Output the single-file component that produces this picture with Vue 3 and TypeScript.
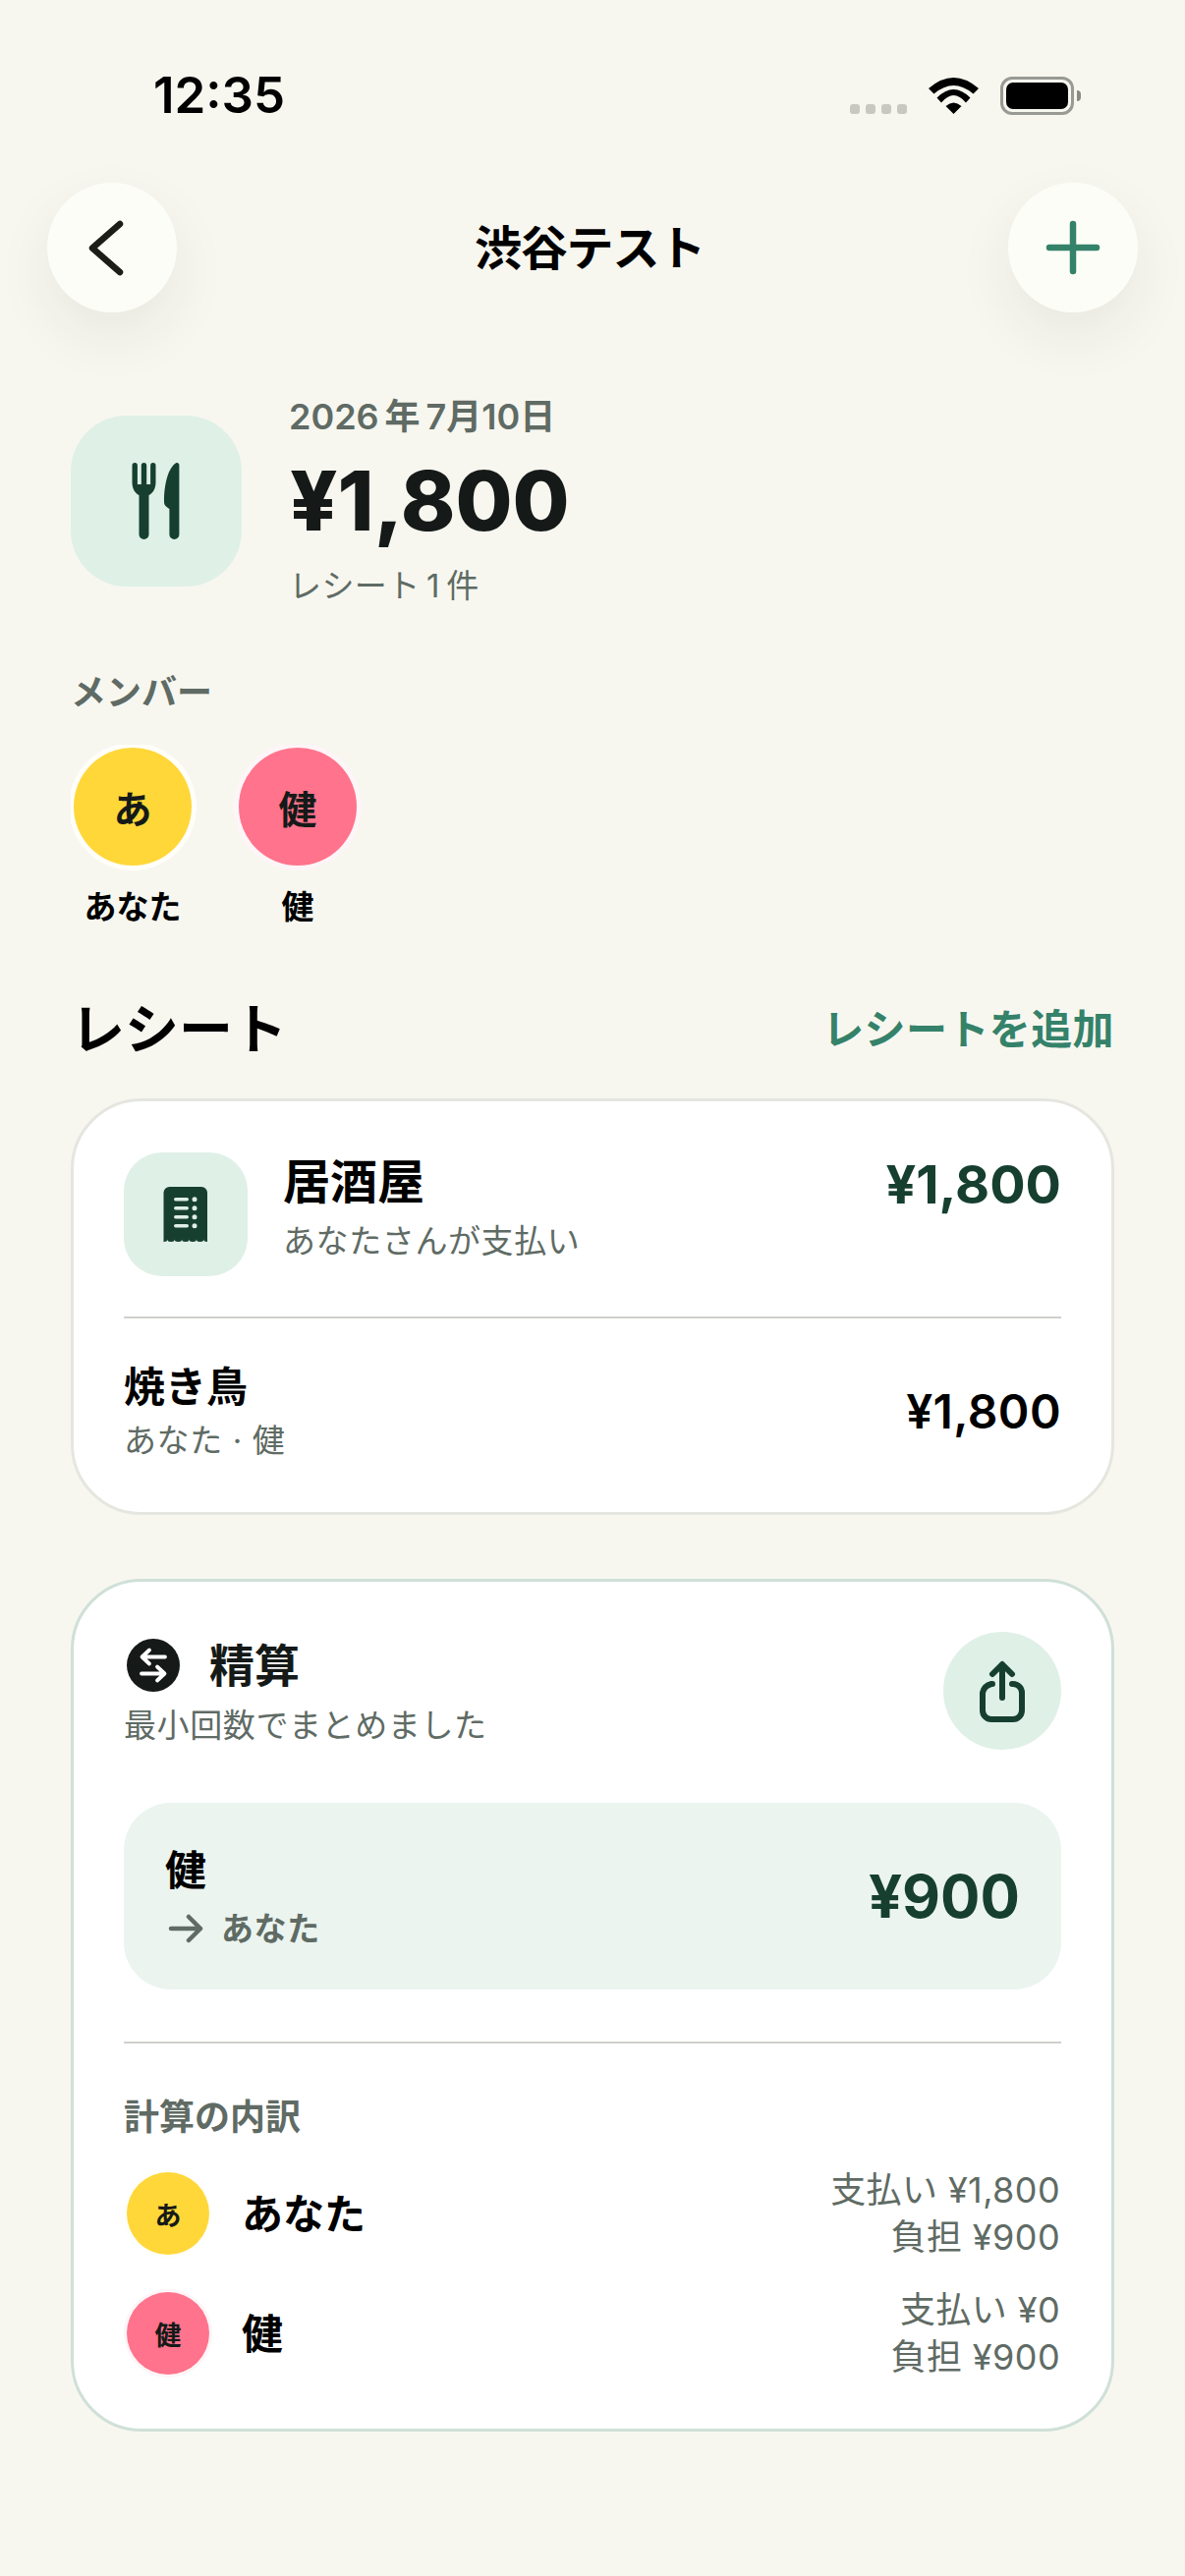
<script setup lang="ts">
interface Person { mark: string; name: string; tone: string; paid: string; owed: string }
const people: Person[] = [
  { mark: 'あ', name: 'あなた', tone: 'yellow', paid: '支払い ¥1,800', owed: '負担 ¥900' },
  { mark: '健', name: '健', tone: 'pink', paid: '支払い ¥0', owed: '負担 ¥900' },
]
const ticks = [0, 9, 18, 27]
</script>

<template>
  <div class="page">
    <header class="status">
      <span class="time">12:35</span>
      <div class="status-right">
        <div class="dots"><i></i><i></i><i></i><i></i></div>
        <svg class="wifi" width="51" height="37" viewBox="0 0 51 37">
          <path d="M25.5 37L17.5 29Q25.5 22 33.5 29Z" />
          <path d="M8.5 20.5Q25.5 3.5 42.5 20.5L38 25.5Q25.5 10.5 13 25.5Z" />
          <path d="M0 11Q25.5 -11 51 11L45.5 16.5Q25.5 -0.5 5.5 16.5Z" />
        </svg>
        <div class="battery"><div class="battery-body"><div class="battery-fill"></div></div><div class="battery-nub"></div></div>
      </div>
    </header>

    <nav class="nav">
      <button class="round">
        <svg width="132" height="132" viewBox="0 0 132 132"><path d="M74 42L46 66.500L74 91" fill="none" stroke="#1d1d18" stroke-width="6.500" stroke-linecap="round" stroke-linejoin="round" /></svg>
      </button>
      <h1 class="nav-title">渋谷テスト</h1>
      <button class="round">
        <svg width="132" height="132" viewBox="0 0 132 132"><path d="M66 42V90M42 66H90" fill="none" stroke="#35826a" stroke-width="6.500" stroke-linecap="round" /></svg>
      </button>
    </nav>

    <section class="hero">
      <div class="hero-icon">
        <svg width="174" height="174" viewBox="0 0 174 174" fill="#163f30">
          <path d="M65.200 48a2.700 2.700 0 0 1 2.700 2.700V70h3.900V50.700a2.700 2.700 0 0 1 5.400 0V70h3.900V50.700a2.700 2.700 0 0 1 5.400 0V68c0 6.500-3 11-7 13V121a5 5 0 0 1-10 0V81c-4-2-7-6.500-7-13V50.700a2.700 2.700 0 0 1 2.700-2.700z" />
          <path d="M107.500 48a2.700 2.700 0 0 1 2.900 2.700V121a5 5 0 0 1-10 0V95c-3-2-5.400-3.500-5.400-7C95 70 99 53 107.500 48z" />
        </svg>
      </div>
      <div class="hero-text">
        <div class="hero-date">2026&#8201;年&#8201;7月10日</div>
        <div class="hero-amount">¥1,800</div>
        <div class="hero-sub">レシート&#8201;1&#8201;件</div>
      </div>
    </section>

    <div class="members-label">メンバー</div>
    <div class="members">
      <div v-for="p in people" :key="p.name" class="member">
        <div class="avatar" :class="p.tone">{{ p.mark }}</div>
        <div class="member-name">{{ p.name }}</div>
      </div>
    </div>

    <div class="section-head">
      <h2 class="section-title">レシート</h2>
      <span class="section-link">レシートを追加</span>
    </div>

    <section class="card receipt-card">
      <div class="receipt-top">
        <div class="receipt-icon">
          <svg width="126" height="126" viewBox="0 0 126 126">
            <path d="M47 35H79a6 6 0 0 1 6 6V91q-3.700 0-3.700-2.500q0 2.500-3.700 2.500t-3.700-2.500q0 2.500-3.700 2.500t-3.700-2.500q0 2.500-3.700 2.500t-3.700-2.500q0 2.500-3.700 2.500t-3.700-2.500q0 2.500-3.700 2.500t-3.700-2.500q0 2.500-3.800 2.500V41a6 6 0 0 1 6-6z" fill="#163f30" />
            <g v-for="y in ticks" :key="y">
              <rect x="51" :y="46 + y" width="15" height="3.500" rx="1.750" fill="#dfeee6" />
              <circle cx="72" :cy="47.750 + y" r="2.500" fill="#dfeee6" />
            </g>
          </svg>
        </div>
        <div class="receipt-text">
          <div class="receipt-name">居酒屋</div>
          <div class="sub">あなたさんが支払い</div>
        </div>
        <div class="receipt-price">¥1,800</div>
      </div>
      <div class="rule receipt-rule"></div>
      <div class="item">
        <div>
          <div class="item-name">焼き鳥</div>
          <div class="sub">あなた · 健</div>
        </div>
        <div class="item-price">¥1,800</div>
      </div>
    </section>

    <section class="card settle-card">
      <div class="settle-head">
        <div class="settle-text">
          <div class="settle-title-row">
            <svg width="54" height="54" viewBox="0 0 54 54">
              <circle cx="27" cy="27" r="27" fill="#151a18" />
              <path d="M39 18.500H16M23 11.500L15.500 18.500L23 25.500M15 35.500H38M31 28.500L38.500 35.500L31 42.500" fill="none" stroke="#fff" stroke-width="3.800" stroke-linecap="round" stroke-linejoin="round" />
            </svg>
            <h2 class="settle-title">精算</h2>
          </div>
          <div class="sub">最小回数でまとめました</div>
        </div>
        <button class="share">
          <svg width="120" height="120" viewBox="0 0 120 120" fill="none" stroke="#163f30" stroke-width="6" stroke-linecap="round" stroke-linejoin="round">
            <path d="M60 67V36M50 43L60 33L70 43" />
            <path d="M50 53H49A12 12 0 0 0 40 62V80A9 9 0 0 0 49 89H71A9 9 0 0 0 80 80V62A9 9 0 0 0 71 53H70" />
          </svg>
        </button>
      </div>

      <div class="transfer">
        <div>
          <div class="transfer-from">健</div>
          <div class="transfer-to">
            <svg width="36" height="30" viewBox="0 0 36 30" fill="none" stroke="#5f6b64" stroke-width="4.500" stroke-linecap="round" stroke-linejoin="round"><path d="M3 15H33M21 3L33 15L21 27" /></svg>
            <span>あなた</span>
          </div>
        </div>
        <div class="transfer-amount">¥900</div>
      </div>

      <div class="rule settle-rule"></div>
      <div class="break-title">計算の内訳</div>
      <div class="rows">
        <div v-for="p in people" :key="p.name" class="row">
          <div class="small-avatar" :class="p.tone">{{ p.mark }}</div>
          <div class="row-name">{{ p.name }}</div>
          <div class="row-nums">
            <div>{{ p.paid }}</div>
            <div>{{ p.owed }}</div>
          </div>
        </div>
      </div>
    </section>
  </div>
</template>

<style scoped>
.page {
  box-sizing: border-box;
  width: 1206px;
  height: 2622px;
  overflow: hidden;
  background: #f7f7f0;
  color: #000;
  font-family: Inter, "Noto Sans CJK JP", sans-serif;
}
h1, h2 { margin: 0; }
button { border: 0; padding: 0; display: block; }
svg { display: block; }

.status { display: flex; justify-content: space-between; height: 186px; box-sizing: border-box; padding: 66px 106px 0 156px; }
.time { font-size: 51px; font-weight: 600; line-height: 62px; }
.status-right { display: flex; align-items: flex-start; padding-top: 12px; }
.dots { display: flex; gap: 6px; margin-top: 28px; margin-right: 22px; }
.dots i { width: 10px; height: 10px; border-radius: 3px; background: #c8c8c2; }
.wifi { fill: #000; margin-top: 1px; margin-right: 22px; }
.battery { display: flex; align-items: center; }
.battery-body { box-sizing: border-box; width: 75px; height: 39px; border: 3px solid #9a9a94; border-radius: 12px; padding: 3px; }
.battery-fill { height: 100%; background: #000; border-radius: 7px; }
.battery-nub { width: 4px; height: 11px; margin-left: 3px; background: #8a8a85; border-radius: 0 4px 4px 0; }

.nav { display: flex; justify-content: space-between; align-items: center; padding: 0 48px; }
.round { width: 132px; height: 132px; border-radius: 50%; background: #fdfdf8; box-shadow: 0 24px 60px rgba(40, 40, 30, 0.07); }
.nav-title { font-size: 48px; font-weight: 700; line-height: 60px; letter-spacing: -1.2px; padding-top: 2px; margin-right: 6px; }

.hero { display: flex; align-items: center; gap: 48px; margin-top: 82px; padding: 0 72px; }
.hero-icon { width: 174px; height: 174px; border-radius: 57px; background: #dff0e7; }
.hero-date { font-size: 36px; line-height: 48px; font-weight: 600; color: #5f6b64; }
.hero-amount { font-size: 84px; line-height: 100px; font-weight: 800; color: #151a18; margin: 12px 0 12px 1px; }
.hero-sub { font-size: 33px; line-height: 48px; color: #5f6b64; letter-spacing: 0.4px; }

.members-label { margin: 61px 72px 0; font-size: 36px; line-height: 48px; font-weight: 600; color: #5f6b64; }
.members { display: flex; gap: 48px; margin: 29px 72px 0; padding: 3px 3px 0; overflow: hidden; }
.member { width: 120px; display: flex; flex-direction: column; align-items: center; gap: 18px; }
.avatar { width: 120px; height: 120px; border-radius: 50%; display: flex; align-items: center; justify-content: center; font-size: 39px; font-weight: 700; color: #151a18; }
.yellow { background: #ffd738; box-shadow: 0 0 0 5px #fffef9; }
.pink { background: #ff738c; box-shadow: 0 0 0 5px #fdf5f7; }
.member-name { font-size: 33px; line-height: 48px; font-weight: 700; }

.section-head { display: flex; justify-content: space-between; align-items: center; margin-top: 65px; padding: 0 72px; }
.section-title { font-size: 55px; line-height: 71px; font-weight: 700; }
.section-link { font-size: 42px; line-height: 60px; font-weight: 700; color: #35826a; letter-spacing: 0.4px; }

.card { box-sizing: border-box; margin: 0 72px; background: #fff; border-radius: 72px; border: 3px solid #e6e6e1; }
.receipt-card { margin-top: 35px; height: 424px; padding: 52px 51px 0; }
.receipt-top { display: flex; align-items: flex-start; }
.receipt-icon { width: 126px; height: 126px; border-radius: 39px; background: #dff0e7; margin-right: 36px; }
.receipt-name { font-size: 48px; line-height: 60px; font-weight: 700; }
.sub { font-size: 33px; line-height: 48px; color: #5f6b64; letter-spacing: 0.6px; }
.receipt-text .sub { margin-top: 6px; }
.receipt-price { margin-left: auto; font-size: 54px; line-height: 66px; font-weight: 700; color: #163f30; }
.rule { height: 2px; background: #d0d0cc; }
.receipt-rule { margin-top: 41px; }
.item { display: flex; justify-content: space-between; align-items: center; margin-top: 40px; }
.item-name { font-size: 42px; line-height: 60px; font-weight: 700; }
.item-price { font-size: 48px; font-weight: 600; letter-spacing: 0.4px; }

.settle-card { margin-top: 65px; height: 868px; padding: 51px 51px 0; border-color: #cfe0d8; }
.settle-head { display: flex; justify-content: space-between; align-items: center; }
.settle-title-row { display: flex; align-items: center; gap: 30px; height: 60px; padding: 2px 0 0 3px; }
.settle-title { font-size: 46px; line-height: 56px; font-weight: 700; color: #151a18; }
.settle-text .sub { margin-top: 7px; }
.share { width: 120px; height: 120px; border-radius: 50%; background: #dff0e7; }
.transfer { display: flex; justify-content: space-between; align-items: center; height: 190px; box-sizing: border-box; margin-top: 54px; padding: 0 42px; border-radius: 48px; background: #ebf4ef; }
.transfer-from { font-size: 42px; line-height: 60px; font-weight: 700; }
.transfer-to { display: flex; align-items: center; gap: 18px; margin-top: 5px; padding-left: 3px; font-size: 33px; line-height: 48px; font-weight: 600; color: #5f6b64; letter-spacing: 0.6px; }
.transfer-amount { font-size: 60px; font-weight: 700; color: #163f30; }
.settle-rule { margin-top: 53px; }
.break-title { margin-top: 51px; font-size: 36px; line-height: 48px; font-weight: 600; color: #5f6b64; }
.rows { display: flex; flex-direction: column; gap: 26px; margin-top: 26px; }
.row { display: flex; align-items: center; }
.small-avatar { width: 84px; height: 84px; margin: 0 3px; border-radius: 50%; display: flex; align-items: center; justify-content: center; font-size: 27px; font-weight: 700; color: #151a18; }
.small-avatar.yellow { box-shadow: 0 0 0 3px #fffef9; }
.small-avatar.pink { box-shadow: 0 0 0 3px #fdf5f7; }
.row-name { margin-left: 30px; padding-bottom: 6px; font-size: 42px; font-weight: 700; }
.row-nums { margin-left: auto; margin-right: 1px; text-align: right; font-size: 36px; line-height: 48px; color: #5f6b64; letter-spacing: 0.4px; }
</style>

<style>
html, body { margin: 0; background: #f7f7f0; }
</style>
